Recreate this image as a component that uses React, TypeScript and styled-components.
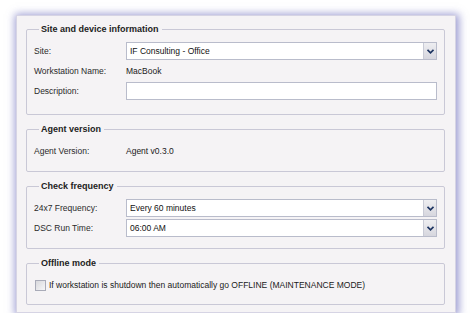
import styled, { createGlobalStyle } from "styled-components";

const Global = createGlobalStyle`
  html, body {
    margin: 0;
    padding: 0;
    background: #ffffff;
  }
  body {
    font-family: "Liberation Sans", Arial, sans-serif;
  }
`;

function Chevron() {
  return (
    <svg width="7" height="5" viewBox="0 0 7 5">
      <path d="M0.5 0.8 L3.5 3.8 L6.5 0.8" fill="none" stroke="#1d3461" strokeWidth="1.7" />
    </svg>
  );
}

function Select({ value }: { value: string }) {
  return (
    <Field>
      <FieldText>{value}</FieldText>
      <DropButton>
        <Chevron />
      </DropButton>
    </Field>
  );
}

export default function App() {
  return (
    <Stage>
      <Global />
      <Panel>
        <Group $pb={14}>
          <Legend>Site and device information</Legend>
          <Rows>
            <Label>Site:</Label>
            <Select value="IF Consulting - Office" />
            <Label>Workstation Name:</Label>
            <Value>MacBook</Value>
            <Label>Description:</Label>
            <Field />
          </Rows>
        </Group>

        <Group $pb={11}>
          <Legend>Agent version</Legend>
          <Rows>
            <Label>Agent Version:</Label>
            <Value>Agent v0.3.0</Value>
          </Rows>
        </Group>

        <Group $pb={11}>
          <Legend>Check frequency</Legend>
          <Rows>
            <Label>24x7 Frequency:</Label>
            <Select value="Every 60 minutes" />
            <Label>DSC Run Time:</Label>
            <Select value="06:00 AM" />
          </Rows>
        </Group>

        <Group $pb={10}>
          <Legend>Offline mode</Legend>
          <CheckRow>
            <Box />
            <span>If workstation is shutdown then automatically go OFFLINE (MAINTENANCE MODE)</span>
          </CheckRow>
        </Group>
      </Panel>
    </Stage>
  );
}

/* ===== layout ===== */

const Stage = styled.div`
  padding: 15px 0 0 16px;
`;

const Panel = styled.div`
  box-sizing: border-box;
  width: 440px;
  height: 298px;
  background: #f5f3f5;
  border: 1px solid #d6d4e4;
  box-shadow: 1px 1px 8px 2px rgba(90, 90, 180, 0.6);
  padding: 7px 10px 0 9px;
  display: flex;
  flex-direction: column;
  gap: 8px;
`;

/* ===== groups ===== */

const Group = styled.fieldset<{ $pb: number }>`
  margin: 0;
  min-width: 0;
  border: 1px solid #c9c8d6;
  border-radius: 2px;
  padding: 7px 7px ${(p) => p.$pb}px 7px;
`;

const Legend = styled.legend`
  margin-left: 5px;
  padding: 0 3px 0 2px;
  font-size: 9px;
  line-height: 12px;
  font-weight: bold;
  color: #222;
`;

const Rows = styled.div`
  display: grid;
  grid-template-columns: 92px 1fr;
  grid-auto-rows: 18px;
  row-gap: 2px;
  align-items: center;
`;

const Label = styled.div`
  font-size: 8.5px;
  color: #2a2a2a;
`;

const Value = styled.div`
  font-size: 8.5px;
  color: #1a1a1a;
`;

/* ===== inputs ===== */

const Field = styled.div`
  box-sizing: border-box;
  height: 18px;
  background: #ffffff;
  border: 1px solid #b9bccb;
  display: flex;
  align-items: center;
`;

const FieldText = styled.span`
  flex: 1;
  padding-left: 3px;
  font-size: 8.5px;
  color: #111;
`;

const DropButton = styled.div`
  box-sizing: border-box;
  width: 13px;
  height: 16px;
  border-left: 1px solid #c9cbd6;
  background: linear-gradient(#eeeef1, #d6d6de);
  display: flex;
  align-items: center;
  justify-content: center;
`;

const CheckRow = styled.label`
  height: 18px;
  display: flex;
  align-items: center;
  gap: 3px;
  padding-left: 1px;
  font-size: 8.5px;
  color: #1a1a1a;
`;

const Box = styled.span`
  box-sizing: border-box;
  width: 11px;
  height: 11px;
  border: 1px solid #a9abb8;
  background: linear-gradient(135deg, #d8d8dc, #f6f6f8);
`;
